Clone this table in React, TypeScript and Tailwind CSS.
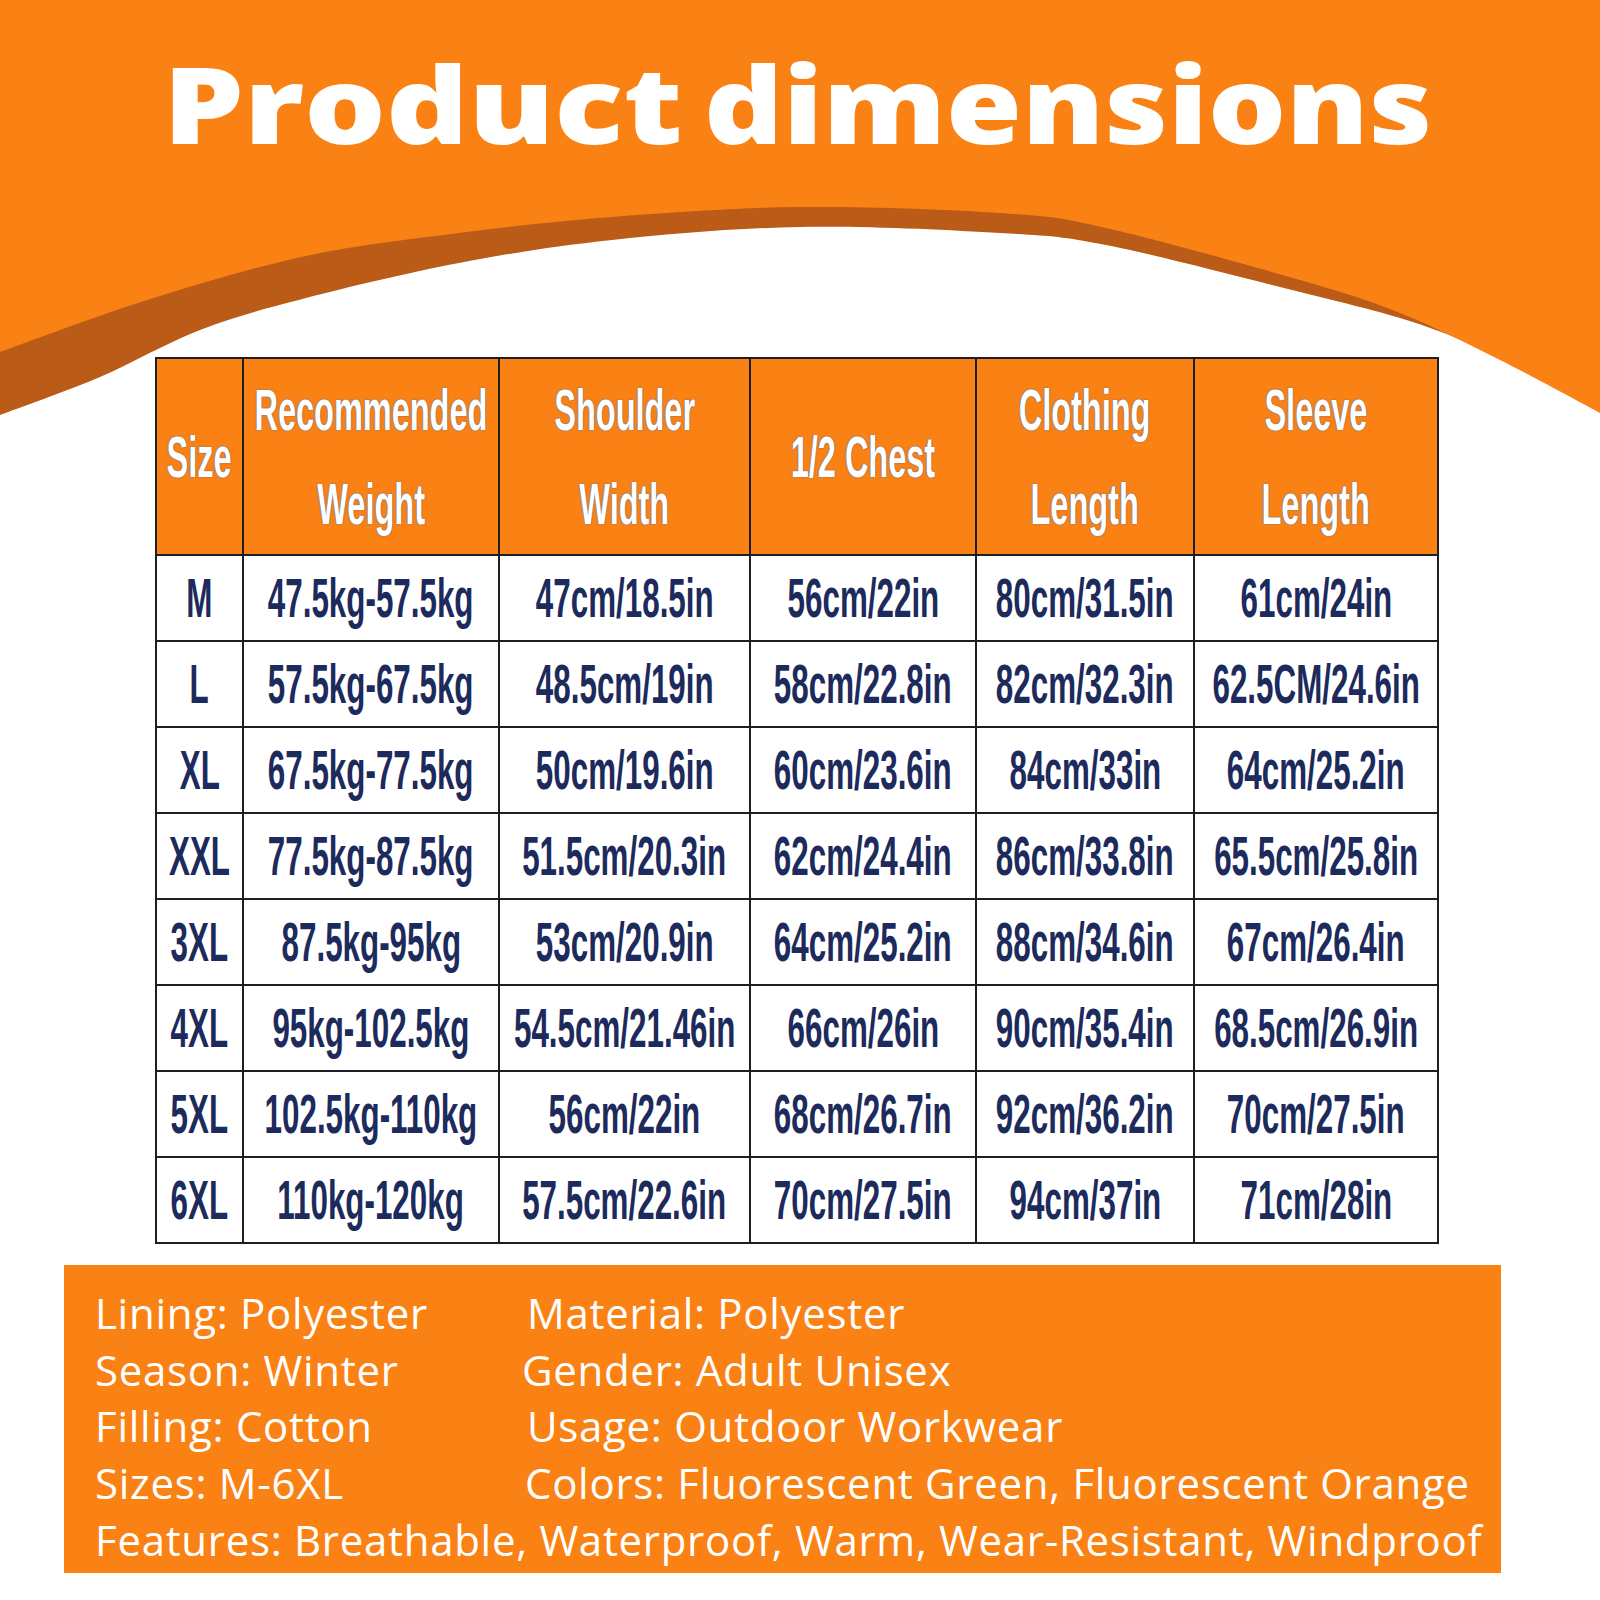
import React from "react";

type Pt = [number, number];

function smooth(pts: Pt[]): string {
  let d = "";
  for (let i = 0; i < pts.length - 1; i++) {
    const p0 = pts[i - 1] || pts[i];
    const p1 = pts[i];
    const p2 = pts[i + 1];
    const p3 = pts[i + 2] || p2;
    const c1x = p1[0] + (p2[0] - p0[0]) / 6;
    const c1y = p1[1] + (p2[1] - p0[1]) / 6;
    const c2x = p2[0] - (p3[0] - p1[0]) / 6;
    const c2y = p2[1] - (p3[1] - p1[1]) / 6;
    d += ` C${c1x.toFixed(1)},${c1y.toFixed(1)} ${c2x.toFixed(1)},${c2y.toFixed(1)} ${p2[0]},${p2[1]}`;
  }
  return d;
}

const orangeEdge: Pt[] = [
  [0, 352],
  [147, 300],
  [306, 256],
  [459, 233],
  [612, 217],
  [800, 207],
  [1000, 213],
  [1106, 228],
  [1300, 280],
  [1400, 313],
  [1500, 360],
  [1600, 413],
];

const brownEdge: Pt[] = [
  [0, 415],
  [100, 377],
  [200, 330],
  [306, 298],
  [459, 263],
  [612, 240],
  [800, 227],
  [1000, 233],
  [1106, 245],
  [1300, 292],
  [1400, 318],
  [1470, 343],
  [1500, 356],
  [1600, 409],
];

const orangePath = `M0,0 L0,352${smooth(orangeEdge)} L1600,0 Z`;
const brownPath = `M0,0 L0,415${smooth(brownEdge)} L1600,0 Z`;

const headers: string[][] = [
  ["Size"],
  ["Recommended", "Weight"],
  ["Shoulder", "Width"],
  ["1/2 Chest"],
  ["Clothing", "Length"],
  ["Sleeve", "Length"],
];

const rows: string[][] = [
  ["M", "47.5kg-57.5kg", "47cm/18.5in", "56cm/22in", "80cm/31.5in", "61cm/24in"],
  ["L", "57.5kg-67.5kg", "48.5cm/19in", "58cm/22.8in", "82cm/32.3in", "62.5CM/24.6in"],
  ["XL", "67.5kg-77.5kg", "50cm/19.6in", "60cm/23.6in", "84cm/33in", "64cm/25.2in"],
  ["XXL", "77.5kg-87.5kg", "51.5cm/20.3in", "62cm/24.4in", "86cm/33.8in", "65.5cm/25.8in"],
  ["3XL", "87.5kg-95kg", "53cm/20.9in", "64cm/25.2in", "88cm/34.6in", "67cm/26.4in"],
  ["4XL", "95kg-102.5kg", "54.5cm/21.46in", "66cm/26in", "90cm/35.4in", "68.5cm/26.9in"],
  ["5XL", "102.5kg-110kg", "56cm/22in", "68cm/26.7in", "92cm/36.2in", "70cm/27.5in"],
  ["6XL", "110kg-120kg", "57.5cm/22.6in", "70cm/27.5in", "94cm/37in", "71cm/28in"],
];

const info: [string, string, string][] = [
  ["Lining: Polyester", "Material: Polyester", "ml-[1px]"],
  ["Season: Winter", "Gender: Adult Unisex", "ml-[-4px]"],
  ["Filling: Cotton", "Usage: Outdoor Workwear", "ml-[1px]"],
  ["Sizes: M-6XL", "Colors: Fluorescent Green, Fluorescent Orange", "ml-[-1px]"],
];

export default function App() {
  return (
    <div className="relative w-[1600px] h-[1600px] overflow-hidden bg-white font-['Liberation_Sans',Arial,sans-serif]">
      <svg
        className="absolute left-0 top-0"
        width="1600"
        height="440"
        viewBox="0 0 1600 440"
      >
        <path d={brownPath} fill="#BA5B17" />
        <path d={orangePath} fill="#FA8114" />
      </svg>

      <div className="relative flex flex-col">
        <h1 className="mt-[50px] h-[110px] ml-[163px] flex text-[106px] leading-none font-extrabold text-white font-['Open_Sans','Noto_Sans',sans-serif] whitespace-nowrap">
          <span className="w-[541px]">
            <span className="inline-block origin-left scale-x-[1.21]">Product</span>
          </span>
          <span>
            <span className="inline-block origin-left scale-x-[1.16]">dimensions</span>
          </span>
        </h1>

        <div className="ml-[155px] mt-[197px] w-[1284px] grid grid-cols-[85px_254px_249px_224px_216px_242px] grid-rows-[195px_repeat(8,84px)] gap-[2px] p-[2px] bg-[#1e1f26]">
          {headers.map((h, i) => (
            <div
              key={"h" + i}
              className="bg-[#FA8114] flex flex-col items-center justify-center"
            >
              {h.map((line) => (
                <div
                  key={line}
                  className="h-[94px] flex items-center justify-center whitespace-nowrap"
                >
                  <span className="inline-block scale-x-[0.56] text-[58px] leading-none font-bold text-white [text-shadow:0_0_2px_#5d7196,0_0_1px_#5d7196]">
                    {line}
                  </span>
                </div>
              ))}
            </div>
          ))}
          {rows.map((r, ri) =>
            r.map((c, ci) => (
              <div
                key={ri + "-" + ci}
                className="bg-white flex items-center justify-center whitespace-nowrap"
              >
                <span className="inline-block scale-x-[0.56] text-[56px] leading-none font-bold text-[#1d2a5c]">
                  {c}
                </span>
              </div>
            ))
          )}
        </div>

        <div className="ml-[64px] mt-[21px] w-[1437px] h-[308px] bg-[#FA8114] pl-[31px] pt-[20px] text-white text-[42px] leading-[56.7px] tracking-[0.7px] font-['Open_Sans','Noto_Sans',sans-serif] whitespace-nowrap">
          {info.map(([a, b, off]) => (
            <div key={a} className="grid grid-cols-[431px_1fr]">
              <div>{a}</div>
              <div className={off}>{b}</div>
            </div>
          ))}
          <div>Features: Breathable, Waterproof, Warm, Wear-Resistant, Windproof</div>
        </div>
      </div>
    </div>
  );
}
